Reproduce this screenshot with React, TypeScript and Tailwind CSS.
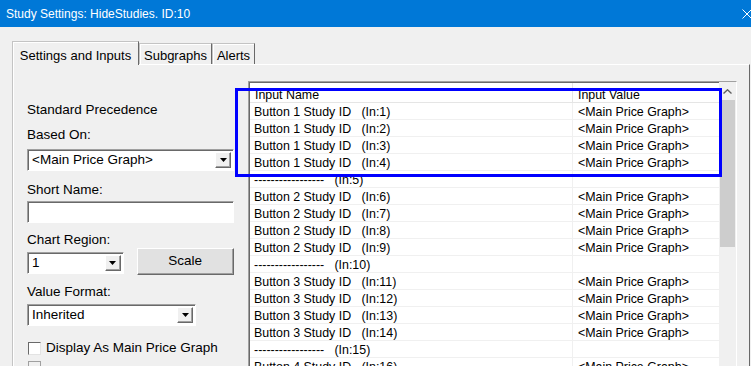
const font = { fontFamily: '"Liberation Sans", Arial, sans-serif' };

type Row = { name: string; value: string };

const rows: Row[] = [];
let n = 1;
for (let b = 1; b <= 4; b++) {
  for (let i = 0; i < 4; i++) {
    rows.push({ name: `Button ${b} Study ID   (In:${n})`, value: "<Main Price Graph>" });
    n++;
  }
  rows.push({ name: `-----------------   (In:${n})`, value: "" });
  n++;
}

const Arrow = () => (
  <div className="absolute right-[2px] top-[2px] bottom-[2px] w-[16px] flex items-center justify-center bg-[#f0f0f0] border border-t-white border-l-white border-b-[#696969] border-r-[#696969] shadow-[inset_-1px_-1px_0_#a0a0a0]">
    <svg width="7" height="4" viewBox="0 0 7 4">
      <path d="M0 0h7L3.5 4z" fill="#000" />
    </svg>
  </div>
);

const Combo = ({ text, className }: { text: string; className: string }) => (
  <div
    className={`relative h-[22px] bg-white border border-t-[#a0a0a0] border-l-[#a0a0a0] border-b-white border-r-white shadow-[inset_1px_1px_0_#696969] pl-[4px] flex items-center text-[13.5px] ${className}`}
  >
    <span className="leading-none">{text}</span>
    <Arrow />
  </div>
);

const Label = ({ text, className }: { text: string; className: string }) => (
  <div className={`h-[16px] leading-[16px] text-[13.5px] whitespace-nowrap ${className}`}>{text}</div>
);

const Tab = ({ label, active }: { label: string; active?: boolean }) => (
  <div
    className={`flex items-start justify-center text-[13px] border-t border-l border-r border-t-[#c4c4c4] border-l-[#c4c4c4] border-r-[#696969] shadow-[inset_1px_1px_0_#fff] bg-[#f0f0f0] ${
      active ? "h-[24px] w-[127px] pt-[4px] relative z-10 -mb-px" : "h-[21px] pt-[2px] px-[4px]"
    }`}
  >
    {label}
  </div>
);

const App = () => {
  return (
    <div className="relative w-[751px] h-[366px] overflow-hidden bg-[#f0f0f0] text-black" style={font}>
      <div className="h-[27px] bg-[#0078d7] flex items-center justify-between pl-[6px] text-white text-[12px]">
        <span>Study Settings: HideStudies. ID:10</span>
        <svg width="10" height="10" viewBox="0 0 10 10" className="mr-[-1px]">
          <path d="M0.5 0.5L9.5 9.5M9.5 0.5L0.5 9.5" stroke="#fff" strokeWidth="1" />
        </svg>
      </div>

      <div className="flex items-end ml-[12px] mt-[14px] h-[23px]">
        <Tab label="Settings and Inputs" active />
        <Tab label="Subgraphs" />
        <Tab label="Alerts" />
      </div>

      <div className="ml-[12px] w-[738px] h-[320px] border-t border-l border-r border-t-white border-l-[#c4c4c4] border-r-[#696969] shadow-[inset_1px_0_0_#fff] flex">
        <div className="ml-[14px] w-[207px] flex flex-col">
          <Label text="Standard Precedence" className="mt-[37px]" />
          <Label text="Based On:" className="mt-[9px]" />
          <Combo text="<Main Price Graph>" className="mt-[6px] w-[207px]" />
          <Label text="Short Name:" className="mt-[11px]" />
          <div className="mt-[3px] h-[22px] w-[207px] bg-white border border-t-[#a0a0a0] border-l-[#a0a0a0] border-b-white border-r-white shadow-[inset_1px_1px_0_#696969]" />
          <Label text="Chart Region:" className="mt-[9px]" />
          <div className="flex items-start">
            <Combo text="1" className="mt-[4px] w-[97px]" />
            <button className="ml-[13px] w-[98px] h-[27px] text-[13.5px] bg-[#e1e1e1] border border-t-white border-l-white border-b-[#696969] border-r-[#696969] shadow-[inset_-1px_-1px_0_#a0a0a0]">
              Scale
            </button>
          </div>
          <Label text="Value Format:" className="mt-[9px]" />
          <Combo text="Inherited" className="mt-[4px] w-[169px]" />
          <div className="mt-[14px] flex items-center h-[16px]">
            <div className="w-[13px] h-[13px] bg-white border border-t-[#696969] border-l-[#696969] border-b-[#e3e3e3] border-r-[#e3e3e3] ml-[1px]" />
            <span className="ml-[5px] text-[13.5px] whitespace-nowrap">Display As Main Price Graph</span>
          </div>
          <div className="mt-[5px] ml-[1px] w-[13px] h-[13px] bg-[#f0f0f0] border border-[#a0a0a0]" />
        </div>

        <div className="ml-[14px] mt-[16px] w-[489px] flex border-t border-l border-t-[#a0a0a0] border-l-[#a0a0a0] border-r border-r-white shadow-[inset_1px_1px_0_#696969] bg-white">
          <div className="flex-1 flex flex-col text-[12.4px] pl-px pt-px">
            <div className="flex h-[22px] border-b border-[#e5e5e5]">
              <div className="w-[323px] h-full border-r border-[#e5e5e5] pl-[5px] pt-[5px] leading-[14px]">Input Name</div>
              <div className="pl-[5px] h-full pt-[5px] leading-[14px]">Input Value</div>
            </div>
            {rows.map((r, i) => (
              <div key={i} className="flex h-[17px] border-b border-[#f0f0f0]">
                <div className="w-[323px] border-r border-[#f0f0f0] pl-[4px] pt-[2px] leading-[14px] whitespace-pre">{r.name}</div>
                <div className="pl-[5px] pt-[2px] leading-[14px] whitespace-pre">{r.value}</div>
              </div>
            ))}
          </div>
          <div className="w-[17px] flex flex-col bg-[#f0f0f0] pt-px">
            <div className="h-[17px] flex items-center justify-center">
              <svg width="9" height="5" viewBox="0 0 9 5">
                <path d="M0.5 4.5L4.5 0.8L8.5 4.5" stroke="#606060" strokeWidth="1.4" fill="none" />
              </svg>
            </div>
            <div className="mx-[1px] h-[147px] bg-[#cdcdcd]" />
          </div>
        </div>
      </div>

      <div className="absolute left-[235px] top-[88px] w-[487px] h-[89px] border-[3px] border-[#0000ff]" />
    </div>
  );
};

export default App;
